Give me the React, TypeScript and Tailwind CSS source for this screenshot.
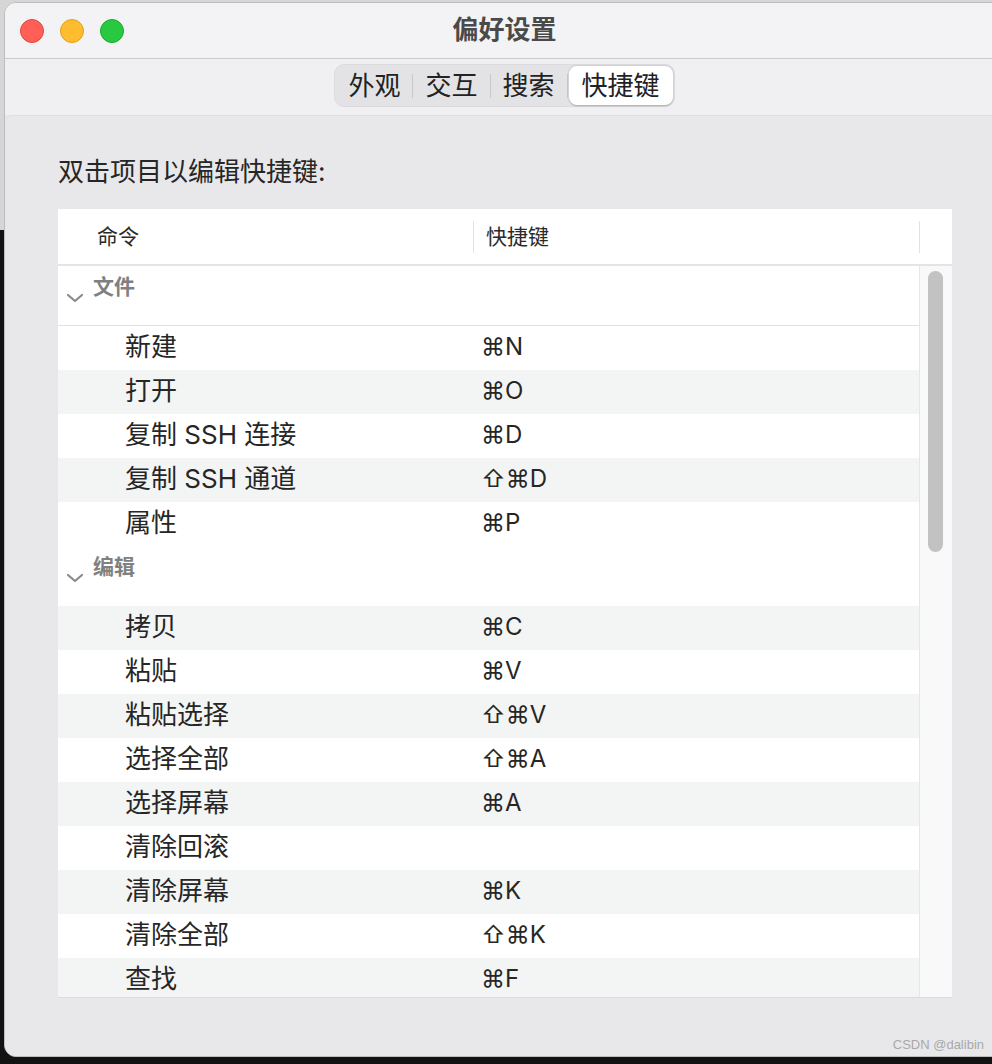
import React from "react";

type Item = { name: string; keys: string; gray?: boolean };
type Group = { title: string; line?: boolean; items: Item[] };

const groups: Group[] = [
  {
    title: "文件",
    line: true,
    items: [
      { name: "新建", keys: "⌘N" },
      { name: "打开", keys: "⌘O", gray: true },
      { name: "复制 SSH 连接", keys: "⌘D" },
      { name: "复制 SSH 通道", keys: "⇧⌘D", gray: true },
      { name: "属性", keys: "⌘P" },
    ],
  },
  {
    title: "编辑",
    items: [
      { name: "拷贝", keys: "⌘C", gray: true },
      { name: "粘贴", keys: "⌘V" },
      { name: "粘贴选择", keys: "⇧⌘V", gray: true },
      { name: "选择全部", keys: "⇧⌘A" },
      { name: "选择屏幕", keys: "⌘A", gray: true },
      { name: "清除回滚", keys: "" },
      { name: "清除屏幕", keys: "⌘K", gray: true },
      { name: "清除全部", keys: "⇧⌘K" },
      { name: "查找", keys: "⌘F", gray: true },
    ],
  },
];

const tabs = ["外观", "交互", "搜索"];

function Chevron() {
  return (
    <svg width="18" height="10" viewBox="0 0 18 10" className="shrink-0">
      <path d="M2 2 L9 8 L16 2" fill="none" stroke="#8a8a8a" strokeWidth="2.2" strokeLinecap="round" strokeLinejoin="round" />
    </svg>
  );
}

export default function App() {
  return (
    <div
      className="relative h-[1064px] w-[992px] overflow-hidden bg-[linear-gradient(to_bottom,#d6d6d6_0,#d6d6d6_230px,#121212_230px)] font-['Inter','Noto_Sans_CJK_SC',sans-serif] text-[#262626]"
    >
      <div className="ml-[4px] mt-[2px] flex h-[1055px] w-[1001px] flex-col overflow-hidden rounded-[12px] border border-[#bdbdbd] bg-[#e8e8ea]">
        {/* title bar */}
        <div className="relative flex h-[56px] shrink-0 items-center border-b border-[#cacaca] bg-[#f3f3f5]">
          <div className="flex gap-[16px] pl-[15px]">
            <span className="h-[24px] w-[24px] rounded-full border border-[#e2463f] bg-[#ff5f57]" />
            <span className="h-[24px] w-[24px] rounded-full border border-[#e1a116] bg-[#febc2e]" />
            <span className="h-[24px] w-[24px] rounded-full border border-[#1aab29] bg-[#28c840]" />
          </div>
          <div className="absolute inset-x-0 top-0 flex h-full items-center justify-center pb-[2px] text-[26px] font-bold text-[#4a4a4a]">
            偏好设置
          </div>
        </div>

        {/* toolbar */}
        <div className="flex h-[56px] shrink-0 items-start justify-center bg-[#f0f0f2] pt-[5px]">
          <div className="flex h-[43px] items-center rounded-[10px] border border-[#dcdcdf] bg-[#e3e3e6] px-[1px]">
            {tabs.map((t) => (
              <React.Fragment key={t}>
                <span className="px-[12px] text-[26px] leading-none text-[#222]">{t}</span>
                <span className="h-[24px] w-px bg-[#c8c8cc]" />
              </React.Fragment>
            ))}
            <span className="ml-[1px] flex h-[39px] items-center rounded-[8px] bg-white px-[13px] text-[26px] leading-none text-[#222] shadow-[0_0.5px_2px_rgba(0,0,0,0.25)]">
              快捷键
            </span>
          </div>
        </div>

        {/* content */}
        <div className="flex flex-1 flex-col rounded-t-[8px] border-t border-[#dedee0] bg-[#e8e8ea] px-[53px] pt-[39px]">
          <div className="text-[26px] leading-[34px] text-[#262626]">双击项目以编辑快捷键:</div>

          <div className="mt-[20px] flex h-[789px] w-[894px] flex-col overflow-hidden border-b border-[#dcdcdc] bg-white">
            {/* header */}
            <div className="flex h-[57px] shrink-0 items-center border-b-2 border-[#e4e4e4] text-[21px] text-[#2a2a2a]">
              <div className="w-[415px] pl-[39px]">命令</div>
              <span className="h-[32px] w-px bg-[#e2e2e2]" />
              <div className="w-[445px] pl-[12px]">快捷键</div>
              <span className="h-[32px] w-px bg-[#e2e2e2]" />
            </div>

            {/* body */}
            <div className="flex flex-1 overflow-hidden">
              <div className="w-[861px] overflow-hidden">
                {groups.map((g) => (
                  <div key={g.title}>
                    <div
                      className={
                        "flex h-[60px] items-start gap-[9px] pl-[8px] pt-[6px] " +
                        (g.line ? "border-b border-[#e2e2e2]" : "")
                      }
                    >
                      <span className="mt-[21px]">
                        <Chevron />
                      </span>
                      <span className="text-[21px] font-bold leading-[30px] text-[#808080]">{g.title}</span>
                    </div>
                    {g.items.map((it) => (
                      <div
                        key={it.name}
                        className={"flex h-[44px] items-center pb-[2px] " + (it.gray ? "bg-[#f3f4f4]" : "bg-white")}
                      >
                        <div className="w-[423px] whitespace-nowrap pl-[67px] text-[26px] leading-[32px]">{it.name}</div>
                        <div className="whitespace-nowrap text-[24px] leading-[32px]">{it.keys}</div>
                      </div>
                    ))}
                  </div>
                ))}
              </div>
              {/* scrollbar */}
              <div className="flex-1 border-l border-[#e6e6e6] bg-[#f9f9f9] pl-[8px] pt-[5px]">
                <div className="h-[281px] w-[15px] rounded-full bg-[#c2c2c2]" />
              </div>
            </div>
          </div>
        </div>
      </div>

      <div className="absolute bottom-[10px] right-[8px] font-['Liberation_Sans',sans-serif] text-[13px] text-[#a8a8a8]">
        CSDN @dalibin
      </div>
    </div>
  );
}
